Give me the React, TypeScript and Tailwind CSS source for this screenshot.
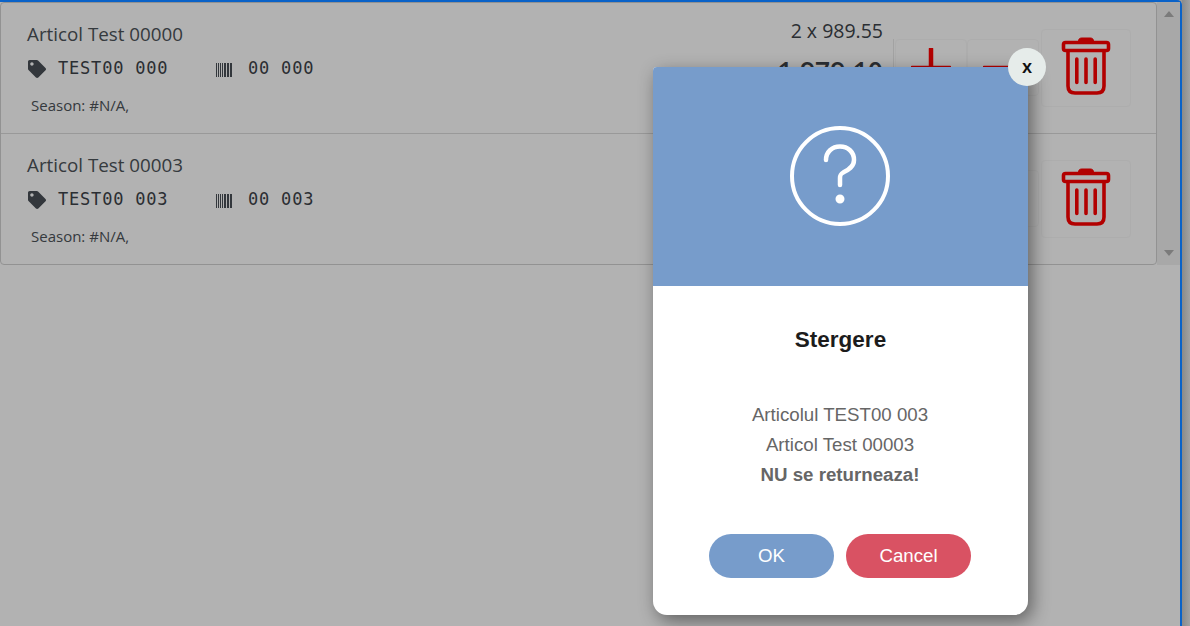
import React from "react";
import { FaTag } from "react-icons/fa";

const articles = [
  { name: "Articol Test 00000", code: "TEST00 000", barcode: "00 000", qty: "2 x 989.55", total: "1,979.10" },
  { name: "Articol Test 00003", code: "TEST00 003", barcode: "00 003", qty: "2 x 989.55", total: "1,979.10" },
];

const TrashIcon = () => (
  <svg width="50" height="58" viewBox="0 0 50 58" fill="none" stroke="#ff0000" className="mb-[4px]">
    <path d="M17.5 4.5 C17.5 1.5 19 1 21 1 H29 C31 1 32.500 1.500 32.500 4.500 Z" fill="#ff0000" strokeWidth="1" />
    <rect x="2.500" y="5.500" width="45" height="8" rx="2" strokeWidth="3.600" />
    <path d="M7 13.500 V49 C7 53.500 9.500 56 14 56 H36 C40.500 56 43 53.500 43 49 V13.500" strokeWidth="3.600" />
    <path d="M15.800 22 V45.500 M25 22 V45.500 M34.200 22 V45.500" strokeWidth="3.600" strokeLinecap="round" />
  </svg>
);

const BarcodeIcon = () => (
  <svg width="16" height="14" viewBox="0 0 16 14" fill="#495057" className="mt-[2px]">
    <rect x="0" width="1" height="14" />
    <rect x="2" width="1" height="14" />
    <rect x="4" width="1" height="14" />
    <rect x="6" width="1" height="14" />
    <rect x="8" width="2" height="14" />
    <rect x="11" width="2" height="14" />
    <rect x="14" width="2" height="14" />
  </svg>
);

const QtyButton = ({ minus }: { minus?: boolean }) => (
  <div className="flex h-[57px] w-[72px] items-center justify-center rounded border border-[#f8f8f8]">
    <svg width="40" height="40" viewBox="0 0 40 40" stroke="#ff0000" strokeWidth="4.500" strokeLinecap="round">
      <path d="M1 20 H39" />
      {!minus && <path d="M20 1 V39" />}
    </svg>
  </div>
);

const ArticleRow = ({ article }: { article: (typeof articles)[number] }) => (
  <div className="flex h-[131px] border-b border-[#dcdcdc] last:h-[130px] last:border-b-0">
    <div className="flex-1 pl-[26px] pt-[18px]">
      <div className="text-[18.800px] leading-[27px] text-[#4d5359] font-['Open_Sans',sans-serif]">{article.name}</div>
      <div className="mt-[8px] flex h-[26px] items-center font-['DejaVu_Sans_Mono',monospace] text-[17px] tracking-[0.800px] text-[#3d4349]">
        <FaTag size={18} className="ml-[1px] text-[#495057]" />
        <span className="ml-[12px] w-[158px]">{article.code}</span>
        <BarcodeIcon />
        <span className="ml-[16px]">{article.barcode}</span>
      </div>
      <div className="mt-[13px] pl-[4px] text-[15px] leading-[20px] text-[#4d5359] font-['Open_Sans',sans-serif]">
        Season: #N/A,
      </div>
    </div>
    <div className="flex w-[150px] flex-col items-end pr-[10px] pt-[15px] font-['Open_Sans',sans-serif] text-[#3d4349]">
      <div className="text-[19.500px] leading-[26px]">{article.qty}</div>
      <div className="mt-[9px] text-[26.500px] leading-[36px] font-semibold">{article.total}</div>
    </div>
    <div className="mt-[36px] flex h-[57px] border-l border-[#e8e8e8] pl-[1px]">
      <QtyButton />
      <QtyButton minus />
    </div>
    <div className="ml-[2px] mr-[25px] mt-[26px] flex h-[78px] w-[90px] items-center justify-center rounded border border-[#f8f8f8]">
      <TrashIcon />
    </div>
  </div>
);

const App = () => (
  <div className="flex h-[626px] w-[1190px] overflow-hidden bg-[#9a9a9a] font-['Liberation_Sans',sans-serif]">
    <div className="relative h-full w-[1182px] rounded-tr-[5px] border-t-2 border-r-2 border-[#0a62c8]">
      <div className="h-full bg-white">
        <div className="flex h-[263px]">
          <div className="flex-1 overflow-hidden rounded border border-[#d2d2d2] bg-white">
            {articles.map((article) => (
              <ArticleRow key={article.code} article={article} />
            ))}
          </div>
          <div className="flex w-[23px] flex-col items-center justify-between bg-[#f1f1f1] pt-[9px] pb-[9px]">
            <div className="h-0 w-0 border-x-[5px] border-b-[6px] border-x-transparent border-b-[#b0b0b0]" />
            <div className="h-0 w-0 border-x-[5px] border-t-[6px] border-x-transparent border-t-[#b0b0b0]" />
          </div>
        </div>
      </div>

      {/* Backdrop */}
      <div className="absolute inset-0 bg-black/30" />

      {/* Confirm dialog */}
      <div className="absolute top-[65px] left-[653px] flex h-[548px] w-[375px] flex-col rounded-b-[14px] rounded-t-[4px] bg-white shadow-[4px_6px_18px_rgba(0,0,0,0.45)]">
        <button className="absolute -top-[19px] -right-[18px] flex h-[38px] w-[38px] items-center justify-center rounded-full bg-[#e6ecea] pb-[2px] text-[18px] font-semibold text-[#111] font-['Noto_Sans',sans-serif]">
          x
        </button>
        <div className="flex h-[219px] items-center justify-center rounded-t-[4px] bg-[#779ccb]">
          <svg width="104" height="104" viewBox="0 0 104 104" fill="none" stroke="#ffffff" strokeWidth="4" strokeLinecap="round" className="mr-[2px] mb-[2px]">
            <circle cx="52" cy="52" r="48" />
            <path d="M38 36 C38 28 44 22.500 52 22.500 C60 22.500 66 28 66 36 C66 43 60 46 56 48 C53.500 49.500 52 50 52 54 V61" strokeWidth="4.500" />
            <circle cx="52" cy="75" r="3.500" fill="#ffffff" stroke="#ffffff" strokeWidth="2" />
          </svg>
        </div>
        <div className="flex flex-col items-center">
          <h2 className="mt-[40px] text-[22.500px] leading-[28px] font-bold text-[#1c1c1c]">Stergere</h2>
          <div className="mt-[46px] mr-[1px] text-center text-[18.700px] leading-[30px] text-[#666]">
            <div>Articolul TEST00 003</div>
            <div>Articol Test 00003</div>
            <div className="font-bold">NU se returneaza!</div>
          </div>
          <div className="mt-[44px] mr-[2px] flex gap-[12px]">
            <button className="h-[44px] w-[125px] rounded-full bg-[#779ccb] pl-[1px] text-[18.700px] text-white">OK</button>
            <button className="h-[44px] w-[125px] rounded-full bg-[#d95263] pl-[1px] text-[18.700px] text-white">Cancel</button>
          </div>
        </div>
      </div>
    </div>
    <div className="h-full flex-1 bg-gradient-to-r from-[#8a8a8a] to-[#a2a2a2]" />
  </div>
);

export default App;
